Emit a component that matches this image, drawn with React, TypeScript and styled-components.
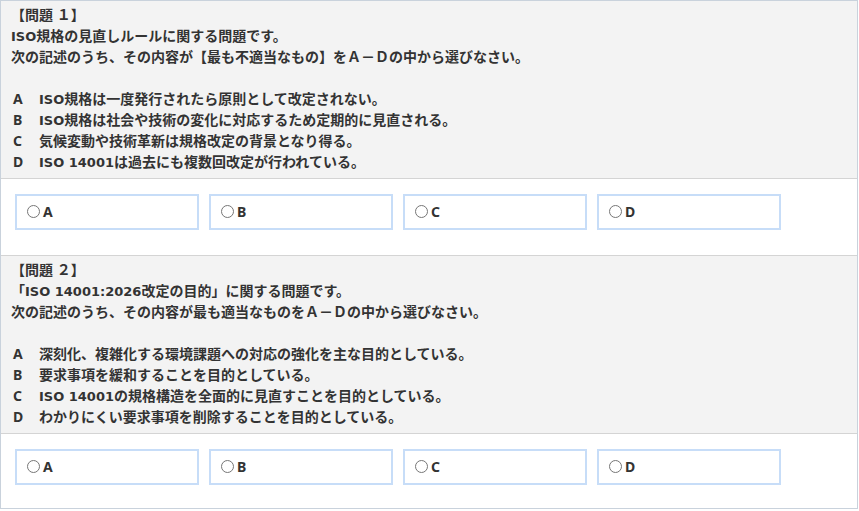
import React from "react";
import styled, { createGlobalStyle } from "styled-components";

const Global = createGlobalStyle`
  html, body { margin: 0; padding: 0; background: #ffffff; }
  body { font-family: "Noto Sans", "Noto Sans CJK JP", sans-serif; }
`;

const Frame = styled.div`
  box-sizing: border-box;
  width: 858px;
  border: 1px solid #c9d2dc;
  background: #ffffff;
  color: #333333;
  font-family: "Noto Sans", "Noto Sans CJK JP", sans-serif;
  font-weight: 700;
  font-size: 14px;
`;

const Prompt = styled.div`
  background: #f3f3f3;
  padding: 3px 10px 6px;
  line-height: 21px;
  border-bottom: 1px solid #d4d4d4;
`;

const Line = styled.div`
  height: 21px;
  white-space: nowrap;
`;

const Statement = styled.div`
  display: flex;
  height: 21px;
  white-space: nowrap;
`;

const Letter = styled.span`
  display: inline-block;
  width: 28px;
  padding-left: 2px;
  box-sizing: border-box;
`;

const Latin = styled.span`
  font-family: "DejaVu Sans", "Noto Sans", sans-serif;
  font-size: 13px;
`;

const Choices = styled.div<{ $last?: boolean }>`
  display: flex;
  gap: 10px;
  padding: 15px 14px ${(p) => (p.$last ? "23px" : "25px")};
  background: #ffffff;
  border-bottom: ${(p) => (p.$last ? "none" : "1px solid #d4d4d4")};
`;

const ChoiceBox = styled.label`
  box-sizing: border-box;
  width: 184px;
  height: 36px;
  border: 2px solid #c7ddf8;
  display: flex;
  align-items: center;
  padding: 0 5px 1px;
  cursor: pointer;
`;

const Radio = styled.input`
  margin: 0 3px 1px 5px;
  width: 13px;
  height: 13px;
`;

const ChoiceLabel = styled.span`
  font-weight: 700;
  font-size: 14px;
  color: #333333;
`;

type Q = {
  id: number;
  title: string;
  lines: string[];
  items: string[];
};

const questions: Q[] = [
  {
    id: 1,
    title: "【問題 １】",
    lines: [
      "ISO規格の見直しルールに関する問題です。",
      "次の記述のうち、その内容が【最も不適当なもの】をＡ－Ｄの中から選びなさい。",
    ],
    items: [
      "ISO規格は一度発行されたら原則として改定されない。",
      "ISO規格は社会や技術の変化に対応するため定期的に見直される。",
      "気候変動や技術革新は規格改定の背景となり得る。",
      "ISO 14001は過去にも複数回改定が行われている。",
    ],
  },
  {
    id: 2,
    title: "【問題 ２】",
    lines: [
      "「ISO 14001:2026改定の目的」に関する問題です。",
      "次の記述のうち、その内容が最も適当なものをＡ－Ｄの中から選びなさい。",
    ],
    items: [
      "深刻化、複雑化する環境課題への対応の強化を主な目的としている。",
      "要求事項を緩和することを目的としている。",
      "ISO 14001の規格構造を全面的に見直すことを目的としている。",
      "わかりにくい要求事項を削除することを目的としている。",
    ],
  },
];

const letters = ["A", "B", "C", "D"];

function Rich({ text }: { text: string }) {
  const parts = text.split(/([A-Za-z0-9][A-Za-z0-9: ]*[A-Za-z0-9]|[A-Za-z0-9])/);
  return (
    <>
      {parts.map((p, i) =>
        i % 2 === 1 ? <Latin key={i}>{p}</Latin> : <React.Fragment key={i}>{p}</React.Fragment>
      )}
    </>
  );
}

export default function App() {
  return (
    <>
      <Global />
      <Frame>
        {questions.map((q, qi) => (
          <section key={q.id}>
            <Prompt>
              <Line>{q.title}</Line>
              {q.lines.map((l) => (
                <Line key={l}>
                  <Rich text={l} />
                </Line>
              ))}
              <Line />
              {q.items.map((it, i) => (
                <Statement key={it}>
                  <Letter>{letters[i]}</Letter>
                  <span>
                    <Rich text={it} />
                  </span>
                </Statement>
              ))}
            </Prompt>
            <Choices $last={qi === questions.length - 1}>
              {letters.map((l) => (
                <ChoiceBox key={l}>
                  <Radio type="radio" name={`q${q.id}`} value={l} />
                  <ChoiceLabel>{l}</ChoiceLabel>
                </ChoiceBox>
              ))}
            </Choices>
          </section>
        ))}
      </Frame>
    </>
  );
}
